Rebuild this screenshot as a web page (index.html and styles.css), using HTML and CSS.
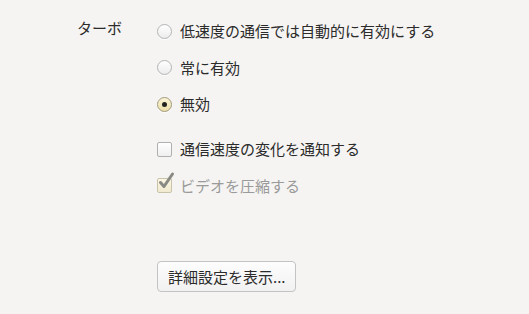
FILE: index.html
```html
<!DOCTYPE html>
<html lang="ja">
<head>
<meta charset="utf-8">
<link rel="stylesheet" href="styles.css">
</head>
<body>
<div class="page">
  <div class="section">
    <div class="label">ターボ</div>
    <div class="options">
      <div class="group">
        <div class="row"><span class="radio"></span><span class="text">低速度の通信では自動的に有効にする</span></div>
        <div class="row"><span class="radio"></span><span class="text">常に有効</span></div>
        <div class="row"><span class="radio checked"></span><span class="text">無効</span></div>
      </div>
      <div class="group checks">
        <div class="row"><span class="checkbox"></span><span class="text">通信速度の変化を通知する</span></div>
        <div class="row disabled">
          <span class="checkbox on">
            <svg class="tick" width="18" height="20" viewBox="0 0 18 20"><path d="M3.5 11.5 L7 15.5 L15.5 3" fill="none" stroke="#8a8a84" stroke-width="3" stroke-linecap="round" stroke-linejoin="round"/></svg>
          </span>
          <span class="text">ビデオを圧縮する</span>
        </div>
      </div>
      <div class="actions">
        <button class="button">詳細設定を表示...</button>
      </div>
    </div>
  </div>
</div>
</body>
</html>
```
FILE: styles.css
```css
html, body {
  margin: 0;
  padding: 0;
  background: #f5f4f2;
}
body {
  font-family: "Noto Sans CJK JP", "Noto Sans", sans-serif;
  font-size: 15px;
  color: #2b2b2b;
  width: 529px;
  height: 314px;
  overflow: hidden;
}
.page {
  padding-top: 20px;
  padding-left: 77px;
}
.section {
  display: flex;
}
.label {
  width: 80px;
  line-height: 16px;
  font-size: 15px;
}
.options {
  display: flex;
  flex-direction: column;
}
.group {
  display: flex;
  flex-direction: column;
  gap: 14.5px;
}
.checks {
  margin-top: 23px;
}
.row {
  display: flex;
  align-items: center;
  height: 22px;
  gap: 8px;
}
.text {
  line-height: 22px;
  white-space: nowrap;
}
.radio {
  box-sizing: border-box;
  width: 15px;
  height: 15px;
  border-radius: 50%;
  border: 1px solid #b4b4b4;
  background: linear-gradient(#ffffff, #ececec);
  box-shadow: 0 1px 0 rgba(255,255,255,0.8);
  position: relative;
  flex: none;
}
.radio.checked {
  border-color: #a29a7e;
  background: linear-gradient(#fbf4d6, #ecdfa8);
}
.radio.checked::after {
  content: "";
  position: absolute;
  left: 4px;
  top: 4px;
  width: 5px;
  height: 5px;
  border-radius: 50%;
  background: #222;
}
.checkbox {
  box-sizing: border-box;
  width: 15px;
  height: 15px;
  border-radius: 2px;
  border: 1px solid #b0b0b0;
  background: linear-gradient(#ffffff, #efefef);
  position: relative;
  flex: none;
}
.checkbox.on {
  border-color: #c9c3ab;
  background: linear-gradient(#fbf6e2, #f1ead0);
}
.tick {
  position: absolute;
  left: -1px;
  top: -8px;
}
.disabled .text {
  color: #9a9a9a;
}
.actions {
  margin-top: 64.5px;
}
.button {
  box-sizing: border-box;
  height: 31px;
  width: 139px;
  padding: 0 10px;
  border: 1px solid #c3c3c3;
  border-radius: 4px;
  background: linear-gradient(#fdfdfd, #f1f1f1);
  font-family: "Noto Sans CJK JP", "Noto Sans", sans-serif;
  font-size: 15px;
  color: #2b2b2b;
  text-align: left;
  white-space: nowrap;
  margin: 0;
}
```
